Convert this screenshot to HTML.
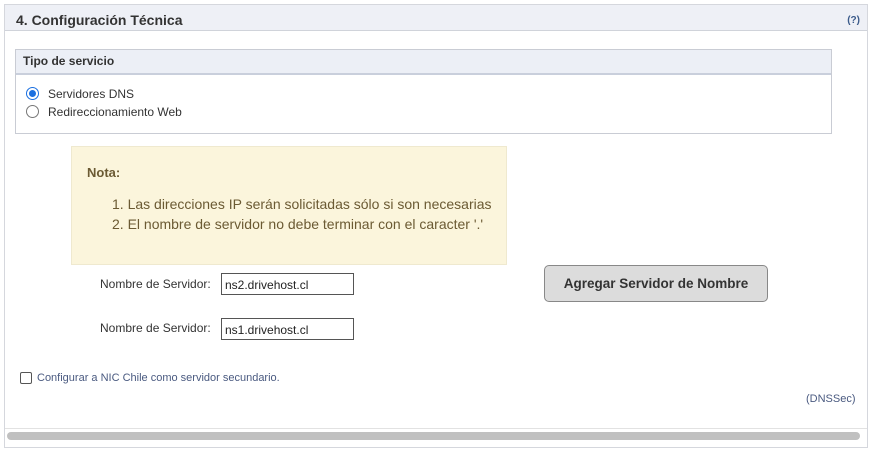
<!DOCTYPE html>
<html><head><meta charset="utf-8"><style>
*{box-sizing:border-box;margin:0;padding:0}
body{width:873px;height:454px;background:#fff;font-family:"Liberation Sans",Arial,sans-serif;position:relative;overflow:hidden;color:#222}
.abs{position:absolute}
#outer{left:4px;top:4px;width:864px;height:444px;border:1px solid #d5d7dd}
#hdr{left:5px;top:5px;width:862px;height:26px;background:#eef0f6;border-bottom:1px solid #d0d3da}
#hdr b{position:absolute;left:11px;top:7px;font-size:14px;color:#333}
#q{position:absolute;right:7px;top:10px;font-size:10px;color:#3a5a8a;font-weight:bold}
#ib{left:15px;top:49px;width:817px;height:85px;border:1px solid #c9ccd4}
#ibh{left:16px;top:50px;width:815px;height:25px;background:#eceff6;border-bottom:2px solid #c9cfdc}
#ibh b{position:absolute;left:7px;top:4px;font-size:12px;color:#333}
.radio{width:13px;height:13px;border-radius:50%;border:1px solid #777;background:#fff}
.radio.on{border:1px solid #1a6fe0;}
.radio.on::after{content:"";position:absolute;left:2px;top:2px;width:7px;height:7px;border-radius:50%;background:#1a6fe0}
.t12{font-size:12px;color:#333}
#nota{left:71px;top:146px;width:436px;height:119px;background:#fbf5dc;border:1px solid #efe9cf}
#nota b{position:absolute;left:15px;top:18px;font-size:13px;color:#6b5a33}
#nota div{position:absolute;left:40px;font-size:14px;color:#6b5a33}
.inp{width:133px;height:22px;border:1px solid #555;font-size:12px;padding:4px 3px;color:#222}
#btn{left:544px;top:265px;width:224px;height:37px;background:#dcdcdc;border:1px solid #888;border-radius:5px;font-weight:bold;font-size:13.5px;color:#333;text-align:center;line-height:35px}
#chk{left:20px;top:372px;width:12px;height:12px;border:1px solid #555;border-radius:2px}
#scroll{left:7px;top:432px;width:853px;height:8px;background:#c0c0c0;border-radius:4px}
#sb{left:5px;top:428px;width:862px;height:19px;border-top:1px solid #e2e2e2;background:#fff}
</style></head><body>
<div id="outer" class="abs"></div>
<div id="hdr" class="abs"><b>4. Configuración Técnica</b><span id="q">(?)</span></div>
<div id="ib" class="abs"></div>
<div id="ibh" class="abs"><b>Tipo de servicio</b></div>
<div class="abs radio on" style="left:26px;top:87px"></div>
<div class="abs t12" style="left:48px;top:87px">Servidores DNS</div>
<div class="abs radio" style="left:26px;top:105px"></div>
<div class="abs t12" style="left:48px;top:105px">Redireccionamiento Web</div>
<div id="nota" class="abs"><b>Nota:</b>
<div style="top:49px">1. Las direcciones IP serán solicitadas sólo si son necesarias</div>
<div style="top:69px">2. El nombre de servidor no debe terminar con el caracter '.'</div></div>
<div class="abs t12" style="left:100px;top:277px">Nombre de Servidor:</div>
<div class="abs inp" style="left:221px;top:273px">ns2.drivehost.cl</div>
<div class="abs t12" style="left:100px;top:321px">Nombre de Servidor:</div>
<div class="abs inp" style="left:221px;top:318px">ns1.drivehost.cl</div>
<div id="btn" class="abs">Agregar Servidor de Nombre</div>
<div id="chk" class="abs"></div>
<div class="abs" style="left:37px;top:372px;font-size:11px;color:#4a5a80">Configurar a NIC Chile como servidor secundario.</div>
<div class="abs" style="left:806px;top:393px;font-size:11px;color:#4a5a80">(DNSSec)</div>
<div id="sb" class="abs"></div>
<div id="scroll" class="abs"></div>
</body></html>
